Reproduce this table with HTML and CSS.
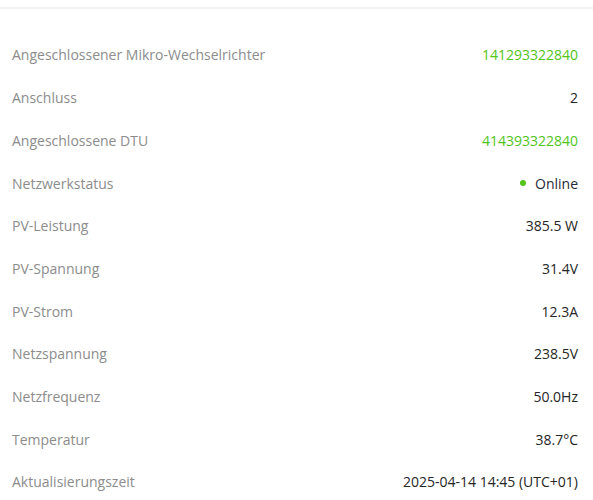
FILE: index.html
```html
<!DOCTYPE html>
<html lang="de">
<head>
<meta charset="utf-8">
<link rel="stylesheet" href="styles.css">
</head>
<body>
<div class="topbar"></div>
<div class="list">
  <div class="row"><span class="label">Angeschlossener Mikro-Wechselrichter</span><span class="value green">141293322840</span></div>
  <div class="row"><span class="label">Anschluss</span><span class="value">2</span></div>
  <div class="row"><span class="label">Angeschlossene DTU</span><span class="value green">414393322840</span></div>
  <div class="row"><span class="label">Netzwerkstatus</span><span class="value status"><i class="dot"></i>Online</span></div>
  <div class="row"><span class="label">PV-Leistung</span><span class="value">385.5 W</span></div>
  <div class="row"><span class="label">PV-Spannung</span><span class="value">31.4V</span></div>
  <div class="row"><span class="label">PV-Strom</span><span class="value">12.3A</span></div>
  <div class="row"><span class="label">Netzspannung</span><span class="value">238.5V</span></div>
  <div class="row"><span class="label">Netzfrequenz</span><span class="value">50.0Hz</span></div>
  <div class="row"><span class="label">Temperatur</span><span class="value">38.7°C</span></div>
  <div class="row"><span class="label">Aktualisierungszeit</span><span class="value">2025-04-14 14:45 (UTC+01)</span></div>
</div>
</body>
</html>
```
FILE: styles.css
```css
html, body {
  margin: 0;
  padding: 0;
  background: #ffffff;
}
body {
  font-family: "Open Sans", "Noto Sans", sans-serif;
  font-size: 14px;
}
.topbar {
  height: 7px;
  border-bottom: 2px solid #f2f2f2;
}
.list {
  padding: 24.6px 15px 0 12px;
}
.row {
  height: 42.7px;
  display: flex;
  align-items: center;
  justify-content: space-between;
}
.label {
  color: #8c8c8c;
}
.value {
  color: #262626;
}
.value.green {
  color: #52c41a;
}
.status {
  display: flex;
  align-items: center;
  color: #1f2937;
}
.dot {
  width: 6px;
  height: 6px;
  border-radius: 50%;
  background: #52c41a;
  margin-right: 9px;
}
```
